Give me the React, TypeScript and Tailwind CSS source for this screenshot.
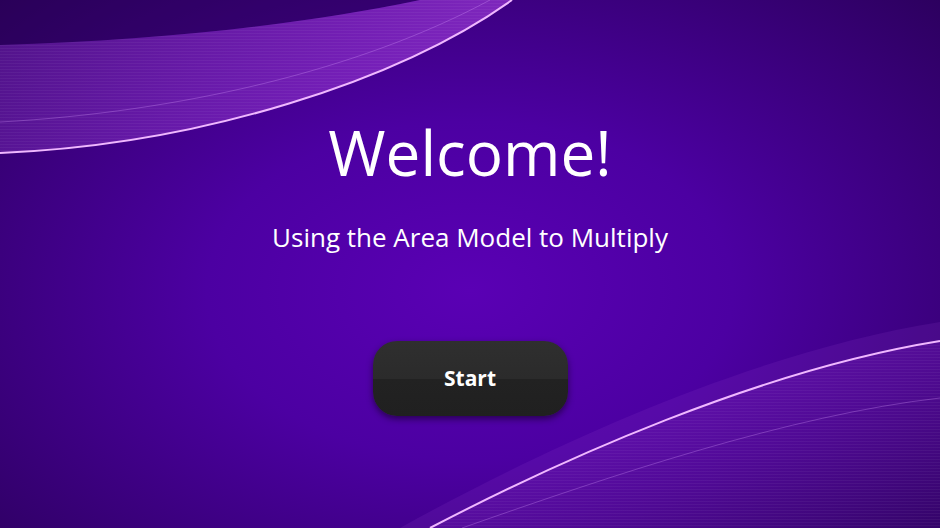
function Waves() {
  return (
    <svg
      className="absolute inset-0 h-full w-full"
      viewBox="0 0 940 528"
      preserveAspectRatio="none"
    >
      <defs>
        <pattern id="stripes" width="6" height="3" patternUnits="userSpaceOnUse">
          <rect width="6" height="1" fill="rgba(255,255,255,0.045)" />
        </pattern>
        <linearGradient id="topBand" x1="0" y1="0" x2="1" y2="0">
          <stop offset="0" stopColor="#7d2cb8" stopOpacity="0.45" />
          <stop offset="0.7" stopColor="#8a2cc8" stopOpacity="0.7" />
          <stop offset="1" stopColor="#9434d0" stopOpacity="0.75" />
        </linearGradient>
        <linearGradient id="bottomBand" x1="0" y1="0" x2="1" y2="1">
          <stop offset="0" stopColor="#8a2cd0" stopOpacity="0.7" />
          <stop offset="0.6" stopColor="#5e12a0" stopOpacity="0.55" />
          <stop offset="1" stopColor="#36066a" stopOpacity="0.6" />
        </linearGradient>
      </defs>

      {/* top-left swoosh */}
      <path d="M0,0 L420,0 C300,25 160,40 0,45 Z" fill="#24004c" fillOpacity="0.35" />
      <path d="M0,45 C160,40 300,25 420,0 L512,0 C400,80 200,145 0,153 Z" fill="url(#topBand)" />
      <path d="M0,45 C160,40 300,25 420,0 L512,0 C400,80 200,145 0,153 Z" fill="url(#stripes)" />
      <path d="M0,122 C180,112 360,70 490,0" fill="none" stroke="#d9a0ff" strokeOpacity="0.3" strokeWidth="1" />
      <path d="M0,153 C200,145 400,80 512,0" fill="none" stroke="#f0b8ff" strokeWidth="2" />

      {/* bottom-right swoosh */}
      <path d="M400,528 C540,450 750,352 940,322 L940,341 C760,370 560,460 430,528 Z" fill="#9a40d0" fillOpacity="0.15" />
      <path d="M430,528 C560,460 760,370 940,341 L940,528 Z" fill="url(#bottomBand)" />
      <path d="M430,528 C560,460 760,370 940,341 L940,528 Z" fill="url(#stripes)" />
      <path d="M462,528 C610,476 790,415 940,398" fill="none" stroke="#d9a0ff" strokeOpacity="0.3" strokeWidth="1" />
      <path d="M430,528 C560,460 760,370 940,341" fill="none" stroke="#f0b8ff" strokeWidth="2" />
    </svg>
  );
}

export default function App() {
  return (
    <div className="relative h-[528px] w-[940px] overflow-hidden bg-[radial-gradient(ellipse_70%_80%_at_50%_55%,#5a00b4_0%,#4c00a2_40%,#2c005e_100%)] font-['Open_Sans',sans-serif] text-white">
      <Waves />
      <div className="relative flex flex-col items-center pt-[121px]">
        <h1 className="text-[62px] leading-[62px] font-normal">Welcome!</h1>
        <p className="mt-[41px] text-[26px] leading-[26px]">Using the Area Model to Multiply</p>
        <button className="mt-[91px] h-[75px] w-[195px] rounded-[24px] bg-[linear-gradient(to_bottom,#2f2f2f_0%,#2b2b2b_50%,#222222_50%,#202020_100%)] text-[21px] font-bold shadow-[0_3px_6px_rgba(25,0,50,0.7)]">
          Start
        </button>
      </div>
    </div>
  );
}
